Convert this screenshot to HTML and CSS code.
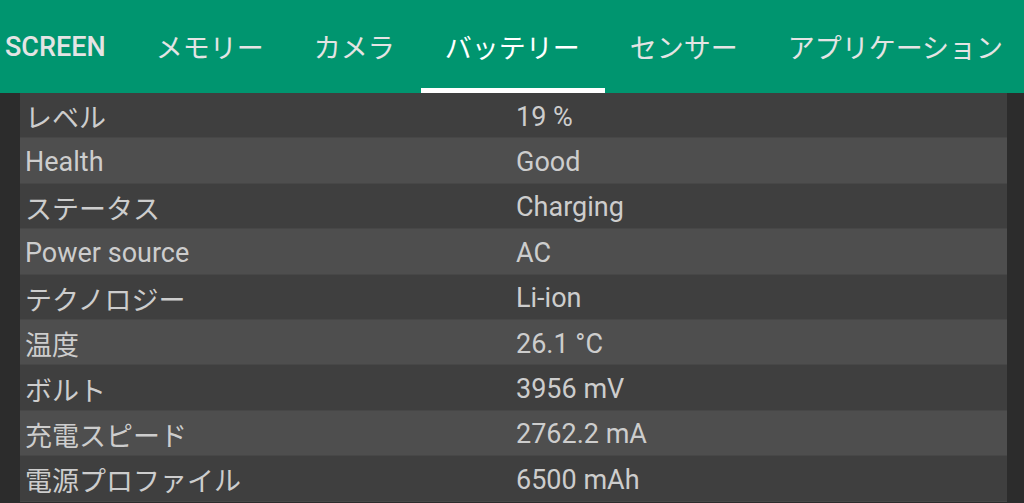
FILE: index.html
```html
<!DOCTYPE html>
<html lang="ja">
<head>
    <meta charset="UTF-8">
    <meta name="viewport" content="width=device-width, initial-scale=1.0">
    <title>バッテリー</title>
    <link rel="stylesheet" href="styles.css">
</head>
<body>
    <nav class="tabs">
        <div class="tab-strip">
            <a class="tab tab-latin">SCREEN</a>
            <a class="tab">メモリー</a>
            <a class="tab">カメラ</a>
            <a class="tab active">バッテリー</a>
            <a class="tab">センサー</a>
            <a class="tab">アプリケーション</a>
        </div>
    </nav>

    <main class="info">
        <div class="row"><span class="label">レベル</span><span class="value">19 %</span></div>
        <div class="row"><span class="label">Health</span><span class="value">Good</span></div>
        <div class="row"><span class="label">ステータス</span><span class="value">Charging</span></div>
        <div class="row"><span class="label">Power source</span><span class="value">AC</span></div>
        <div class="row"><span class="label">テクノロジー</span><span class="value">Li-ion</span></div>
        <div class="row"><span class="label">温度</span><span class="value">26.1 °C</span></div>
        <div class="row"><span class="label">ボルト</span><span class="value">3956 mV</span></div>
        <div class="row"><span class="label">充電スピード</span><span class="value">2762.2 mA</span></div>
        <div class="row"><span class="label">電源プロファイル</span><span class="value">6500 mAh</span></div>
    </main>
</body>
</html>
```

FILE: styles.css
```css
:root {
    --green: #00956f;
    --page-bg: #2c2c2c;
    --row-dark: #3f3f3f;
    --row-light: #4e4e4e;
    --tab-text: #e4e4e4;
    --cell-text: #cdcdcd;
}
* {
    margin: 0;
    padding: 0;
    box-sizing: border-box;
}
html, body {
    height: 100%;
    overflow: hidden;
}
body {
    font-family: Roboto, "Noto Sans CJK JP", sans-serif;
    background: var(--page-bg);
    color: var(--cell-text);
}
.tabs {
    height: 93px;
    background: var(--green);
    overflow: hidden;
}
.tab-strip {
    display: flex;
    height: 100%;
    margin-left: -20px;
}
.tab {
    display: flex;
    align-items: center;
    height: 100%;
    padding: 0 25px;
    font-size: 27px;
    color: var(--tab-text);
    white-space: nowrap;
    position: relative;
}
.tab-latin {
    font-weight: 500;
}
.tab.active {
    color: #fff;
}
.tab.active::after {
    content: "";
    position: absolute;
    left: 1px;
    right: 0;
    bottom: 0;
    height: 5px;
    background: #fff;
}
.info {
    margin: 0 17px 0 20px;
}
.row {
    display: grid;
    grid-template-columns: 491px 1fr;
    align-items: center;
    height: 45.4px;
    padding-top: 3px;
    font-size: 27px;
    background: var(--row-dark);
    border-bottom: 1px solid #474747;
}
.row:nth-child(even) {
    background: var(--row-light);
}
.label, .value {
    padding-left: 5px;
    white-space: nowrap;
}
```
